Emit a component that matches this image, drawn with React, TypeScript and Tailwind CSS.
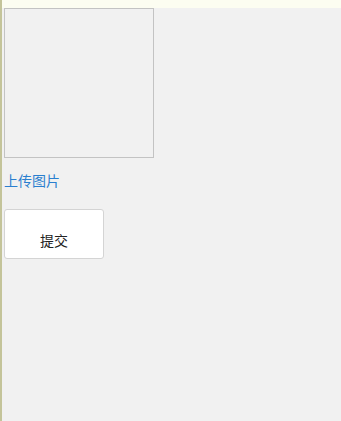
import React from 'react'

const App: React.FC = () => {
    return (
        <div
            className="min-h-[421px] bg-[#f1f1f1] border-l-2 border-[#c4c49a] flex flex-col"
            style={{ fontFamily: '"Noto Sans CJK SC", "Liberation Sans", sans-serif' }}
        >
            <div className="h-[8px] bg-[#fcfdf1]" />
            <div className="pl-[2px] flex flex-col items-start">
                <div className="w-[150px] h-[150px] border border-[#c3c3c3] bg-[#f1f1f1]" />
                <a href="#" className="mt-[12px] text-[14px] leading-[20px] text-[#2a7fcf]">
                    上传图片
                </a>
                <button
                    type="button"
                    className="mt-[19px] w-[100px] h-[50px] bg-white border border-[#d4d4d4] rounded-[3px] text-[14px] text-[#222] pt-[12px]"
                >
                    提交
                </button>
            </div>
        </div>
    )
}

export default App
